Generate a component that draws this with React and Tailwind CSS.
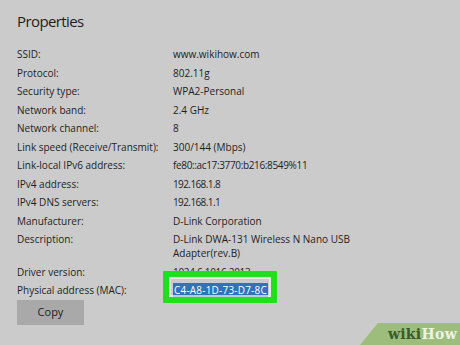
const rows = [
  { label: 'SSID:', value: 'www.wikihow.com' },
  { label: 'Protocol:', value: '802.11g' },
  { label: 'Security type:', value: 'WPA2-Personal' },
  { label: 'Network band:', value: '2.4 GHz' },
  { label: 'Network channel:', value: '8' },
  { label: 'Link speed (Receive/Transmit):', value: '300/144 (Mbps)' },
  { label: 'Link-local IPv6 address:', value: 'fe80::ac17:3770:b216:8549%11', tight: 'tracking-[-0.35px]' },
  { label: 'IPv4 address:', value: '192.168.1.8', tight: 'tracking-[-0.6px]' },
  { label: 'IPv4 DNS servers:', value: '192.168.1.1', tight: 'tracking-[-0.6px]' },
  { label: 'Manufacturer:', value: 'D-Link Corporation' },
  { label: 'Description:', value: 'D-Link DWA-131 Wireless N Nano USB Adapter(rev.B)' },
  { label: 'Driver version:', value: '1024.6.1016.2013', tight: 'tracking-[-0.3px]' },
];

const App = () => {
  return (
    <div
      className="relative w-[460px] h-[345px] overflow-hidden bg-[#cbcbcb] text-[#1e1e1e]"
      style={{ fontFamily: '"Open Sans", "Noto Sans", sans-serif' }}
    >
      <div className="pl-[17px] pt-[9px]">
        <h1 className="text-[15px] leading-[24px] font-normal tracking-[-0.6px]">Properties</h1>

        <div className="mt-[14px] flex flex-col gap-[4.5px] text-[10px] leading-[14px]">
          {rows.map((row) => (
            <div key={row.label} className="flex">
              <div className="w-[156px] shrink-0">{row.label}</div>
              <div className={`w-[190px] ${row.tight || ''}`}>{row.value}</div>
            </div>
          ))}

          {/* MAC row */}
          <div className="flex">
            <div className="w-[156px] shrink-0">Physical address (MAC):</div>
            <div className="relative">
              <span className="bg-[#2f73b8] text-white px-[1px] tracking-[0.2px]">C4-A8-1D-73-D7-8C</span>
              <div className="absolute -left-[10px] -top-[12px] w-[114px] h-[32px] border-[6px] border-[#1fe01a] rounded-[1px]">
                <div className="w-full h-full border-[2px] border-[#e8f5e8]/70"></div>
              </div>
            </div>
          </div>
        </div>

        <button className="mt-[3px] w-[67px] h-[25px] bg-[#a9a9a9] text-[11px] text-[#1e1e1e]">
          Copy
        </button>
      </div>

      {/* wikiHow badge */}
      <div className="absolute right-0 bottom-0 w-[100px] h-[22px] bg-[#9cbd7c] [clip-path:polygon(18px_0,100%_0,100%_100%,0_100%)] flex items-center justify-end pr-[3px]">
        <span
          className="text-[14px] font-bold leading-none tracking-[0.3px]"
          style={{ fontFamily: '"DejaVu Serif", "Liberation Serif", serif' }}
        >
          <span className="text-[#3b5a2b]">wiki</span>
          <span className="text-[#edf3e4]">How</span>
        </span>
      </div>
    </div>
  );
};

export default App;
